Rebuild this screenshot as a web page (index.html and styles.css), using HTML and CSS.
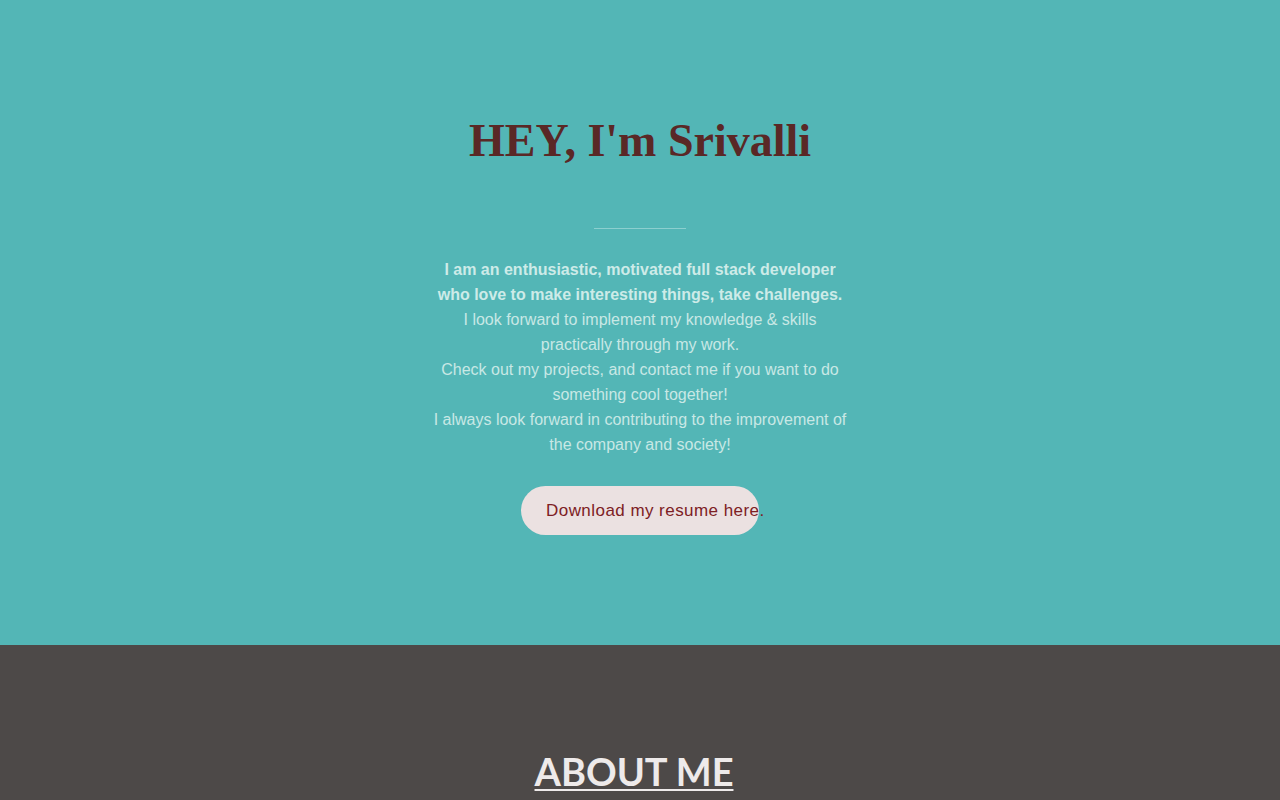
FILE: index.html
```html
<!DOCTYPE html>
<html>
<head>
<meta charset="utf-8">
<link rel="stylesheet" href="styles.css">
</head>
<body>
<section class="hero">
  <h1 class="title">HEY, I'm Srivalli</h1>
  <hr class="divider">
  <div class="intro">
    <p class="bold">I am an enthusiastic, motivated full stack developer who love to make interesting things, take challenges.</p>
    <p>I look forward to implement my knowledge &amp; skills practically through my work.</p>
    <p>Check out my projects, and contact me if you want to do something cool together!</p>
    <p>I always look forward in contributing to the improvement of the company and society!</p>
  </div>
  <a class="resume" href="#">Download my resume here.</a>
</section>
<section class="about">
  <h2 class="about-title">ABOUT ME</h2>
</section>
</body>
</html>
```
FILE: styles.css
```css
html, body { margin: 0; padding: 0; }
body { font-family: "Liberation Sans", Arial, sans-serif; background: #4d4948; overflow: hidden; }
.hero {
  background: #53b6b6;
  height: 645px;
  box-sizing: border-box;
  padding-top: 110px;
  display: flex;
  flex-direction: column;
  align-items: center;
}
.title {
  margin: 0;
  font-family: "Liberation Serif", "Times New Roman", serif;
  font-weight: bold;
  font-size: 46px;
  line-height: 62px;
  color: #5a2826;
}
.divider {
  width: 92px;
  border: 0;
  border-top: 1px solid #8ccfcf;
  margin: 56px 0 0 0;
}
.intro {
  width: 420px;
  margin-top: 28px;
  text-align: center;
  color: #c8e8e5;
  font-size: 16px;
  line-height: 25px;
}
.intro p { margin: 0; }
.intro .bold { font-weight: bold; color: #cdebe8; }
.resume {
  margin-top: 29px;
  width: 238px;
  height: 49px;
  box-sizing: border-box;
  border-radius: 25px;
  background: #ebe1e1;
  color: #7d2024;
  text-decoration: none;
  font-size: 17px;
  line-height: 49px;
  padding-left: 25px;
  white-space: nowrap;
  letter-spacing: 0.45px;
}
.about {
  height: 155px;
  display: flex;
  justify-content: center;
  padding-top: 102px;
  padding-right: 12px;
  box-sizing: border-box;
}
.about-title {
  margin: 0;
  font-family: "Lato", sans-serif;
  font-weight: 700;
  font-size: 38px;
  line-height: 48px;
  color: #eeeaea;
  text-decoration: underline;
  text-decoration-thickness: 2px;
  text-underline-offset: 3px;
}
```
